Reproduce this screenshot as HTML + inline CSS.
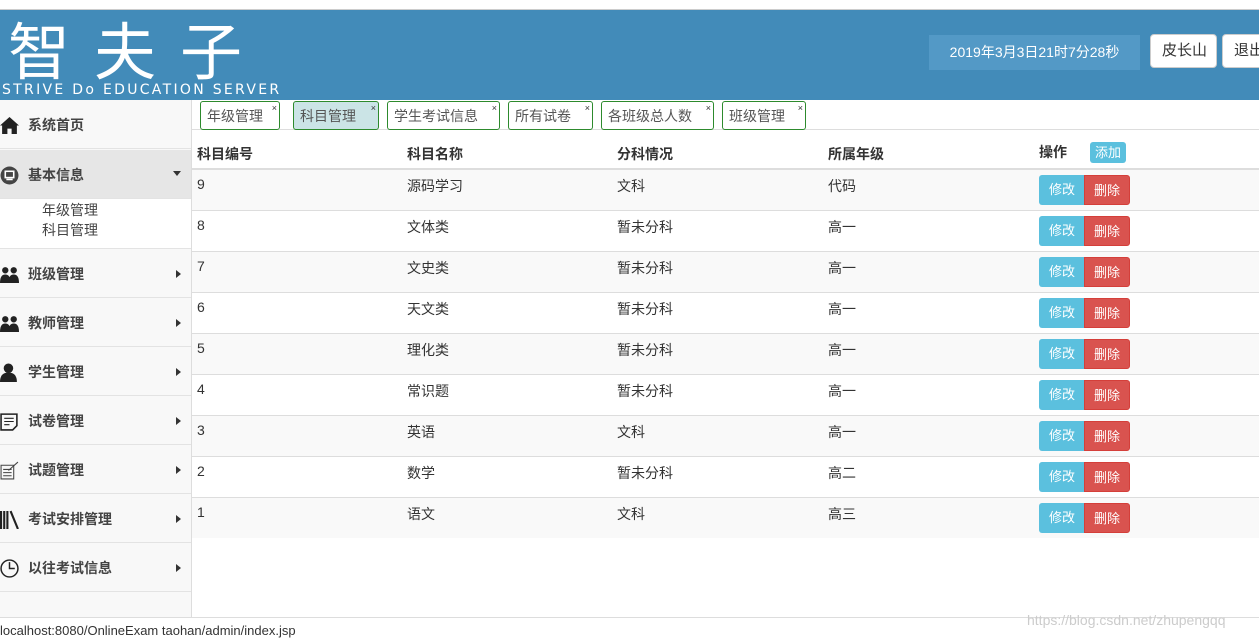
<!DOCTYPE html>
<html><head><meta charset="utf-8"><style>
*{margin:0;padding:0;box-sizing:border-box}
body{width:1259px;height:638px;overflow:hidden;background:#fff;font-family:"Liberation Sans","Noto Sans CJK SC",sans-serif;font-size:14px;color:#333;position:relative}
.abs{position:absolute}
#hdr{left:0;top:9px;width:1259px;height:91px;background:#428bb9;border-top:1px solid #ccc}
.logo{left:8px;top:2px;font-size:62px;color:#fff;letter-spacing:24px;font-family:"WenQuanYi Zen Hei","Noto Sans CJK SC",sans-serif;line-height:70px}
.sub{left:2px;top:72px;color:#fff;font-size:14px;letter-spacing:2.3px;font-family:"DejaVu Sans",sans-serif}
.date{left:929px;top:25px;width:211px;height:35px;background:#5399c6;color:#fff;font-size:14px;text-align:center;line-height:35px}
.btn{top:24px;height:34px;background:#fff;border:1px solid #ccc;border-radius:4px;line-height:32px;font-size:15px;color:#333;padding-left:11px}
#side{left:0;top:100px;width:192px;height:517px;background:#f8f8f8;border-right:1px solid #ddd}
.it{position:absolute;left:0;width:191px;height:49px;border-bottom:1px solid #e3e3e3;font-weight:bold;font-size:14px;color:#444;line-height:51px;padding-left:28px}
.it .ic{position:absolute;left:0;top:16px;width:19px;height:19px}
.it .ar{position:absolute;right:10px;top:21px;width:0;height:0;border-top:4px solid transparent;border-bottom:4px solid transparent;border-left:5px solid #333}
.tab{top:101px;height:29px;border:1px solid #2d8a2d;border-radius:3px;font-size:14px;color:#555;line-height:28px;padding-left:6px}
.tab i{position:absolute;right:2px;top:-8px;font-style:normal;font-size:9px;color:#333}
.row{position:absolute;left:192px;width:1067px;height:41px;border-top:1px solid #ddd}
.row span{position:absolute;top:6px;font-size:14px}
.row .m{top:5px;height:30px;width:46px;color:#fff;font-size:13px;text-align:center;line-height:29px}
</style></head><body>
<div class="abs" style="left:0;top:0;width:1259px;height:9px;background:#fff"></div>
<div id="hdr" class="abs">
<div class="abs logo">智夫子</div>
<div class="abs sub">STRIVE Do EDUCATION SERVER</div>
<div class="abs date">2019年3月3日21时7分28秒</div>
<div class="abs btn" style="left:1150px;width:67px">皮长山</div>
<div class="abs btn" style="left:1222px;width:50px">退出</div>
</div>
<div id="side" class="abs">
<div class="it" style="top:0"><svg class="ic" viewBox="0 0 18 18"><path d="M9 1L0 9h2v8h5v-5h4v5h5V9h2z" fill="#222"/></svg>系统首页</div>
<div class="it" style="top:50px;background:#e6e6e6"><svg class="ic" viewBox="0 0 18 18"><circle cx="9" cy="9" r="8.5" fill="#444"/><rect x="5" y="5" width="8" height="6" fill="none" stroke="#fff" stroke-width="1.5"/><rect x="6" y="12" width="6" height="1.5" fill="#fff"/></svg>基本信息<span style="position:absolute;right:10px;top:21px;border-left:4px solid transparent;border-right:4px solid transparent;border-top:5px solid #333"></span></div>
<div style="position:absolute;left:0;top:99px;width:191px;height:50px;background:#fff;border-bottom:1px solid #e3e3e3;font-size:14px;color:#444;padding:1px 0 0 42px;line-height:20px">年级管理<br>科目管理</div>
<div class="it" style="top:149px"><svg class="ic" viewBox="0 0 18 18"><circle cx="5" cy="5" r="3" fill="#222"/><circle cx="13" cy="5" r="3" fill="#222"/><path d="M0 17q0-8 5-8t5 8zM8 17q0-8 5-8t5 8z" fill="#222"/></svg>班级管理<span class="ar"></span></div>
<div class="it" style="top:198px"><svg class="ic" viewBox="0 0 18 18"><circle cx="5" cy="5" r="3" fill="#222"/><circle cx="13" cy="5" r="3" fill="#222"/><path d="M0 17q0-8 5-8t5 8zM8 17q0-8 5-8t5 8z" fill="#222"/></svg>教师管理<span class="ar"></span></div>
<div class="it" style="top:247px"><svg class="ic" viewBox="0 0 18 18"><circle cx="8" cy="5" r="4.5" fill="#222"/><path d="M0 18q0-9 8-9t8 9z" fill="#222"/></svg>学生管理<span class="ar"></span></div>
<div class="it" style="top:296px"><svg class="ic" viewBox="0 0 18 18"><path d="M1 2h15v11l-4 4H1z" fill="none" stroke="#222" stroke-width="1.5"/><path d="M4 6h9M4 9h9M4 12h5" stroke="#222"/></svg>试卷管理<span class="ar"></span></div>
<div class="it" style="top:345px"><svg class="ic" viewBox="0 0 18 18"><path d="M1 4h12v13H1z" fill="none" stroke="#444"/><path d="M3 8h8M3 11h8M3 14h8M8 9l9-8" stroke="#444"/></svg>试题管理<span class="ar"></span></div>
<div class="it" style="top:394px"><svg class="ic" viewBox="0 0 18 18"><path d="M1 1v17M4 1v17M7 1v17M10 1l7 17" stroke="#222" stroke-width="2"/></svg>考试安排管理<span class="ar"></span></div>
<div class="it" style="top:443px"><svg class="ic" viewBox="0 0 18 18"><circle cx="9" cy="9" r="8" fill="none" stroke="#222" stroke-width="1.4"/><path d="M9 3v6h5" fill="none" stroke="#222" stroke-width="1.4"/></svg>以往考试信息<span class="ar"></span></div>
</div>
<div class="abs" style="left:192px;top:129px;width:1067px;height:1px;background:#ddd"></div>
<div class="abs tab" style="left:200px;width:80px">年级管理<i>×</i></div>
<div class="abs tab" style="left:293px;width:86px;background:#cbe4e6">科目管理<i>×</i></div>
<div class="abs tab" style="left:387px;width:113px">学生考试信息<i>×</i></div>
<div class="abs tab" style="left:508px;width:85px">所有试卷<i>×</i></div>
<div class="abs tab" style="left:601px;width:113px">各班级总人数<i>×</i></div>
<div class="abs tab" style="left:722px;width:84px">班级管理<i>×</i></div>
<div class="abs" style="left:192px;top:138px;width:1067px;height:32px;border-bottom:2px solid #ddd;font-weight:bold;font-size:14px;color:#333">
<span class="abs" style="left:5px;top:6px">科目编号</span><span class="abs" style="left:215px;top:6px">科目名称</span><span class="abs" style="left:425px;top:6px">分科情况</span><span class="abs" style="left:636px;top:6px">所属年级</span><span class="abs" style="left:847px;top:4px">操作</span>
<span class="abs" style="left:898px;top:4px;width:36px;height:21px;background:#5bc0de;border-radius:3px;color:#fff;font-weight:normal;font-size:13px;text-align:center;line-height:21px">添加</span></div>
<div id="rows"></div>
<div class="abs" style="left:0;top:617px;width:1259px;height:21px;background:#fff;border-top:1px solid #ddd;font-size:13px;color:#333;padding:5px 0 0 0;line-height:16px">localhost:8080/OnlineExam taohan/admin/index.jsp</div>
<div class="abs" style="left:1027px;top:612px;font-size:14px;color:#ccc">https://blog.csdn.net/zhupengqq</div>
<script>
var d=[["9","源码学习","文科","代码"],["8","文体类","暂未分科","高一"],["7","文史类","暂未分科","高一"],["6","天文类","暂未分科","高一"],["5","理化类","暂未分科","高一"],["4","常识题","暂未分科","高一"],["3","英语","文科","高一"],["2","数学","暂未分科","高二"],["1","语文","文科","高三"]];
var h="";d.forEach(function(r,i){h+='<div class="row" style="top:'+(169+i*41)+'px;background:'+(i%2?'#fff':'#f9f9f9')+'"><span style="left:5px">'+r[0]+'</span><span style="left:215px">'+r[1]+'</span><span style="left:425px">'+r[2]+'</span><span style="left:636px">'+r[3]+'</span><span class="m" style="left:847px;background:#5bc0de;border-radius:3px 0 0 3px">修改</span><span class="m" style="left:892px;background:#d9534f;border:1px solid #d43f3a;border-radius:0 3px 3px 0">删除</span></div>'});
document.getElementById("rows").innerHTML=h;
</script>
</body></html>
